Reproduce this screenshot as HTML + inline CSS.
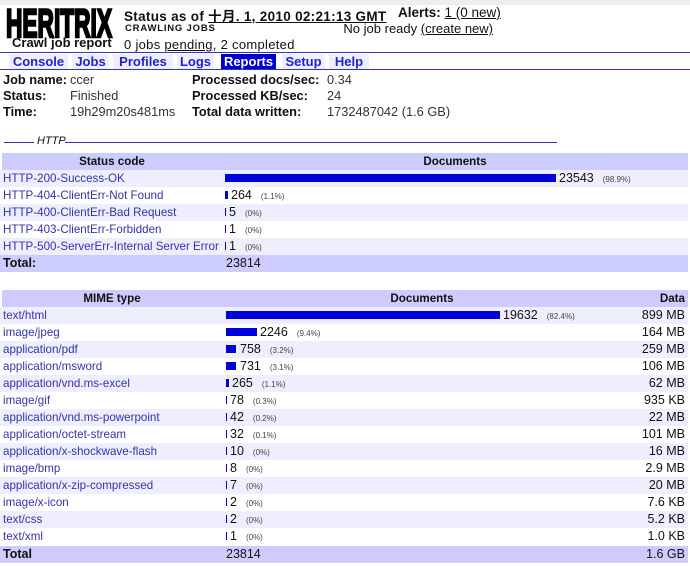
<!DOCTYPE html>
<html><head><meta charset="utf-8"><style>
*{margin:0;padding:0;box-sizing:border-box}
body{width:690px;height:567px;background:#fff;font-family:"Liberation Sans",sans-serif;color:#111;position:relative;overflow:hidden}
.a{position:absolute;white-space:nowrap}
.b{font-weight:bold}
.f{font-size:12.8px}
.tab{position:absolute;top:54px;height:15px;font-size:13px;font-weight:bold;color:#2222cc;background:#eeeeff;line-height:15px;text-align:center}
.row{position:absolute;left:0;width:688px;height:17px;font-family:"Liberation Sans",sans-serif;font-size:11.6px;line-height:17px}
.row .c1{position:absolute;left:3px;color:#3333aa}
.row .bar{position:absolute;top:4px;height:8px;background:#0000dd}
.row .n{position:absolute;font-size:12.5px}
.row .p{font-size:8px;color:#444;margin-left:9px}
.row .d{position:absolute;right:3px;font-size:12.5px}
.hd{background:#ccccff;font-weight:bold;text-align:center}
.sh{background:#eeeeff}
</style></head><body>
<div class="a" style="left:0;top:0;width:690px;height:5px;background:#eee"></div>
<svg class="a" style="left:5px;top:6px" width="110" height="34"><text x="1" y="31" font-family="Liberation Sans" font-weight="900" font-size="40" textLength="106" lengthAdjust="spacingAndGlyphs" fill="#000" stroke="#000" stroke-width="2.5">HERITRIX</text></svg>
<div class="a b" style="left:12px;top:35px;font-size:13px">Crawl job report</div>
<div class="a b" style="left:124px;top:5px;font-size:13.5px;letter-spacing:0.3px">Status as of <span style="text-decoration:underline;font-family:'Liberation Sans','Noto Sans CJK SC',sans-serif">十月. 1, 2010 02:21:13 GMT</span></div>
<div class="a b" style="left:398px;top:5px;font-size:13.5px">Alerts: <span style="font-weight:normal;text-decoration:underline">1 (0 new)</span></div>
<div class="a b" style="left:125px;top:23px;font-size:9.5px;letter-spacing:0.8px">CRAWLING JOBS</div>
<div class="a" style="right:197px;top:21px;font-size:13px">No job ready <span style="text-decoration:underline">(create new)</span></div>
<div class="a" style="left:124px;top:37px;font-size:13px;letter-spacing:0.3px">0 jobs <span style="text-decoration:underline">pending</span>, 2 completed</div>
<div class="a" style="left:0;top:52px;width:690px;height:1px;background:#3333cc"></div>
<div class="tab" style="left:9px;width:59px">Console</div>
<div class="tab" style="left:72px;width:37px">Jobs</div>
<div class="tab" style="left:113px;width:60px">Profiles</div>
<div class="tab" style="left:177px;width:37px">Logs</div>
<div class="tab" style="left:221px;width:55px;background:#0000cc;color:#fff">Reports</div>
<div class="tab" style="left:282px;width:43px">Setup</div>
<div class="tab" style="left:329px;width:40px">Help</div>
<div class="a" style="left:0;top:69px;width:690px;height:1px;background:#3333cc"></div>
<div class="a f" style="left:3px;top:72px;line-height:16px"><b>Job name:</b><br><b>Status:</b><br><b>Time:</b></div>
<div class="a f" style="left:70px;top:72px;line-height:16px;color:#333">ccer<br>Finished<br>19h29m20s481ms</div>
<div class="a f" style="left:192px;top:72px;line-height:16px"><b>Processed docs/sec:</b><br><b>Processed KB/sec:</b><br><b>Total data written:</b></div>
<div class="a f" style="left:327px;top:72px;line-height:16px;color:#333">0.34<br>24<br>1732487042 (1.6 GB)</div>
<div class="a" style="left:4px;top:142px;width:30px;height:1px;background:#3333aa"></div>
<div class="a" style="left:37px;top:135px;font-size:11px;font-style:italic">HTTP</div>
<div class="a" style="left:65px;top:142px;width:492px;height:1px;background:#3333aa"></div>

<div class="row hd" style="top:153px;left:2px;width:686px"><span class="a" style="left:0;width:220px">Status code</span><span class="a" style="left:220px;width:466px">Documents</span></div>
<div class="row sh" style="top:170px"><span class="c1">HTTP-200-Success-OK</span><span class="bar" style="left:225px;width:331px"></span><span class="n" style="left:559px">23543<span class="p">(98.9%)</span></span></div>
<div class="row" style="top:187px"><span class="c1">HTTP-404-ClientErr-Not Found</span><span class="bar" style="left:225px;width:3px"></span><span class="n" style="left:231px">264<span class="p">(1.1%)</span></span></div>
<div class="row sh" style="top:204px"><span class="c1">HTTP-400-ClientErr-Bad Request</span><span class="bar" style="left:225px;width:1px"></span><span class="n" style="left:229px">5<span class="p">(0%)</span></span></div>
<div class="row" style="top:221px"><span class="c1">HTTP-403-ClientErr-Forbidden</span><span class="bar" style="left:225px;width:1px"></span><span class="n" style="left:229px">1<span class="p">(0%)</span></span></div>
<div class="row sh" style="top:238px"><span class="c1">HTTP-500-ServerErr-Internal Server Error</span><span class="bar" style="left:225px;width:1px"></span><span class="n" style="left:229px">1<span class="p">(0%)</span></span></div>
<div class="row" style="top:255px;background:#ccccff;height:17px"><span class="c1 b" style="color:#111;font-size:12.5px">Total:</span><span class="n" style="left:226px">23814</span></div>

<div class="row hd" style="top:290px;left:2px;width:686px"><span class="a" style="left:0;width:220px">MIME type</span><span class="a" style="left:220px;width:400px">Documents</span><span class="a" style="right:3px">Data</span></div>
<div class="row sh" style="top:307px"><span class="c1">text/html</span><span class="bar" style="left:226px;width:274px"></span><span class="n" style="left:503px">19632<span class="p">(82.4%)</span></span><span class="d">899 MB</span></div>
<div class="row" style="top:324px"><span class="c1">image/jpeg</span><span class="bar" style="left:226px;width:31px"></span><span class="n" style="left:260px">2246<span class="p">(9.4%)</span></span><span class="d">164 MB</span></div>
<div class="row sh" style="top:341px"><span class="c1">application/pdf</span><span class="bar" style="left:226px;width:10px"></span><span class="n" style="left:240px">758<span class="p">(3.2%)</span></span><span class="d">259 MB</span></div>
<div class="row" style="top:358px"><span class="c1">application/msword</span><span class="bar" style="left:226px;width:10px"></span><span class="n" style="left:240px">731<span class="p">(3.1%)</span></span><span class="d">106 MB</span></div>
<div class="row sh" style="top:375px"><span class="c1">application/vnd.ms-excel</span><span class="bar" style="left:226px;width:3px"></span><span class="n" style="left:232px">265<span class="p">(1.1%)</span></span><span class="d">62 MB</span></div>
<div class="row" style="top:392px"><span class="c1">image/gif</span><span class="bar" style="left:226px;width:1px"></span><span class="n" style="left:230px">78<span class="p">(0.3%)</span></span><span class="d">935 KB</span></div>
<div class="row sh" style="top:409px"><span class="c1">application/vnd.ms-powerpoint</span><span class="bar" style="left:226px;width:1px"></span><span class="n" style="left:230px">42<span class="p">(0.2%)</span></span><span class="d">22 MB</span></div>
<div class="row" style="top:426px"><span class="c1">application/octet-stream</span><span class="bar" style="left:226px;width:1px"></span><span class="n" style="left:230px">32<span class="p">(0.1%)</span></span><span class="d">101 MB</span></div>
<div class="row sh" style="top:443px"><span class="c1">application/x-shockwave-flash</span><span class="bar" style="left:226px;width:1px"></span><span class="n" style="left:230px">10<span class="p">(0%)</span></span><span class="d">16 MB</span></div>
<div class="row" style="top:460px"><span class="c1">image/bmp</span><span class="bar" style="left:226px;width:1px"></span><span class="n" style="left:230px">8<span class="p">(0%)</span></span><span class="d">2.9 MB</span></div>
<div class="row sh" style="top:477px"><span class="c1">application/x-zip-compressed</span><span class="bar" style="left:226px;width:1px"></span><span class="n" style="left:230px">7<span class="p">(0%)</span></span><span class="d">20 MB</span></div>
<div class="row" style="top:494px"><span class="c1">image/x-icon</span><span class="bar" style="left:226px;width:1px"></span><span class="n" style="left:230px">2<span class="p">(0%)</span></span><span class="d">7.6 KB</span></div>
<div class="row sh" style="top:511px"><span class="c1">text/css</span><span class="bar" style="left:226px;width:1px"></span><span class="n" style="left:230px">2<span class="p">(0%)</span></span><span class="d">5.2 KB</span></div>
<div class="row" style="top:528px"><span class="c1">text/xml</span><span class="bar" style="left:226px;width:1px"></span><span class="n" style="left:230px">1<span class="p">(0%)</span></span><span class="d">1.0 KB</span></div>
<div class="row" style="top:546px;background:#ccccff"><span class="c1 b" style="color:#111;font-size:12.5px">Total</span><span class="n" style="left:226px">23814</span><span class="d">1.6 GB</span></div>
</body></html>
